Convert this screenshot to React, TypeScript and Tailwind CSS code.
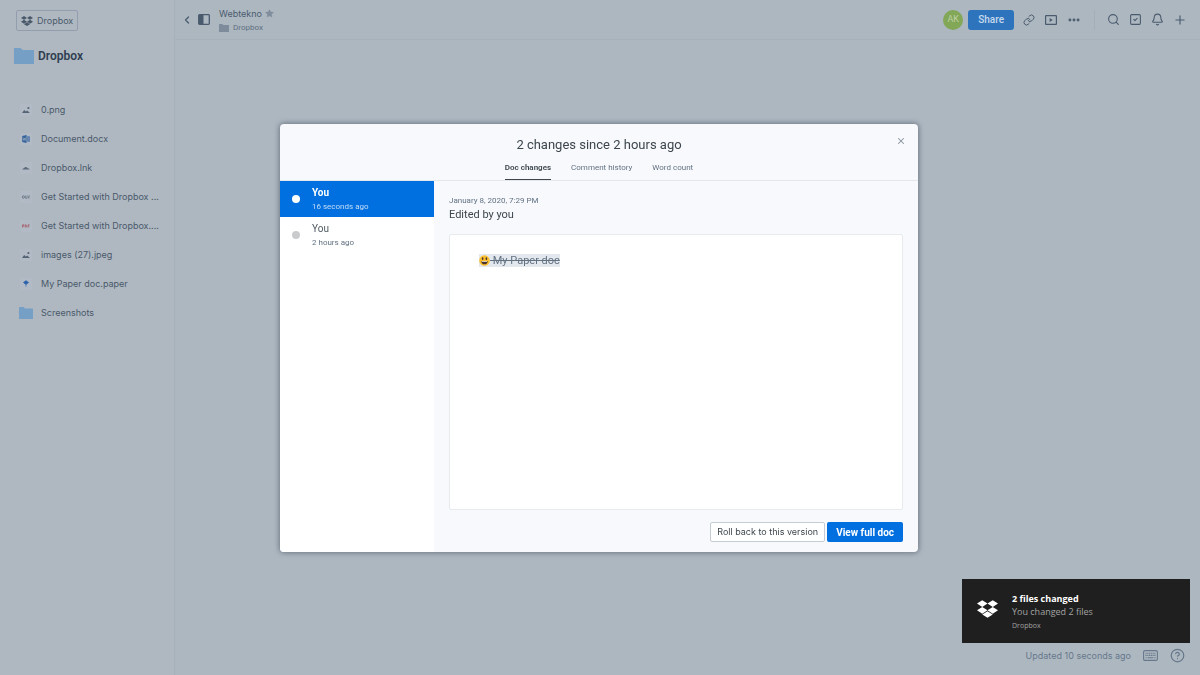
import React from 'react';
import { Bell, ChevronLeft, CircleHelp, Ellipsis, Link, Plus, Search, SquareCheck, Star, X } from 'lucide-react';

type FileKind = 'image' | 'word' | 'link' | 'url' | 'pdf' | 'paper' | 'folder';

interface FileItem {
  name: string;
  kind: FileKind;
}

interface Version {
  author: string;
  when: string;
}

const files: FileItem[] = [
  { name: '0.png', kind: 'image' },
  { name: 'Document.docx', kind: 'word' },
  { name: 'Dropbox.lnk', kind: 'link' },
  { name: 'Get Started with Dropbox ...', kind: 'url' },
  { name: 'Get Started with Dropbox....', kind: 'pdf' },
  { name: 'images (27).jpeg', kind: 'image' },
  { name: 'My Paper doc.paper', kind: 'paper' },
  { name: 'Screenshots', kind: 'folder' },
];

const versions: Version[] = [
  { author: 'You', when: '16 seconds ago' },
  { author: 'You', when: '2 hours ago' },
];

const tabs = ['Doc changes', 'Comment history', 'Word count'];

const DropboxLogo = ({ className }: { className: string }) => (
  <svg viewBox="0 0 24 20" fill="currentColor" className={className} aria-hidden="true">
    <path d="M6 0l6 3.8-6 3.8-6-3.8zM18 0l6 3.8-6 3.8-6-3.8zM6 7.7l6 3.8-6 3.8-6-3.8zM18 7.7l6 3.8-6 3.8-6-3.8zM12 12.6l6 3.7-6 3.7-6-3.7z" />
  </svg>
);

const FolderShape = ({ className }: { className: string }) => (
  <svg viewBox="0 0 20 16" fill="currentColor" className={className} preserveAspectRatio="none" aria-hidden="true">
    <path d="M0 .5Q0 0 .5 0H6.5L8.6 2H19.5Q20 2 20 2.5V15.5Q20 16 19.5 16H.5Q0 16 0 15.5z" />
  </svg>
);

const FileIcon = ({ kind }: { kind: FileKind }) => {
  if (kind === 'folder') return <FolderShape className="h-3 w-[15px] text-[#759fc4]" />;
  return (
    <svg viewBox="0 0 14 14" className="h-[14px] w-[14px]" aria-hidden="true">
      <rect x="1" y="1" width="12" height="12" rx="1" fill="#b1bac5" />
      {kind === 'image' && (
        <g fill="#566475">
          <path d="M3 10l2.2-3 1.7 1.6 1.2-1L11 10z" />
          <circle cx="9.4" cy="5" r="1.1" />
        </g>
      )}
      {kind === 'word' && (
        <g>
          <path d="M3.2 4l4.4-.9v7.8L3.2 10z" fill="#36659c" />
          <path d="M8 4.2h3v5.6H8z" fill="#6486b0" />
          <path d="M4.1 5.6l.6 2.8.7-2.2.7 2.2.6-2.8" fill="none" stroke="#b3bcc7" strokeWidth=".5" />
        </g>
      )}
      {kind === 'link' && <path d="M3.4 8.6q.3-1.5 1.7-1.4.8-1.8 2.4-1 .9.2 1 1.1 1.8-.2 2 1.3z" fill="#5c6a7a" />}
      {kind === 'url' && (
        <g fill="none" stroke="#5c6a7a" strokeWidth=".8">
          <rect x="3.4" y="5.8" width="2" height="2.4" rx=".8" />
          <path d="M6.8 5.5v2.8h1.1M9 5.5v2.8M9.3 7l1.2 1.3M10.6 5.5v1" />
        </g>
      )}
      {kind === 'pdf' && (
        <g fill="none" stroke="#a8606b" strokeWidth=".8">
          <path d="M3.5 8.6V5.8h1.5v1.4H3.5M6.3 5.8v2.4h.8q.8-1.2 0-2.4zM9 8.6V5.8h1.6M9 7.2h1.3" />
        </g>
      )}
      {kind === 'paper' && (
        <g fill="#2d63ab">
          <path d="M7 3.2l3 2.4L7 8 4 5.6z" />
          <path d="M6 8.4h2v1H6z" fill="#6b8db9" />
        </g>
      )}
    </svg>
  );
};

const KeyboardIcon = () => (
  <svg viewBox="0 0 15 11" className="h-[11px] w-[15px]" fill="none" stroke="currentColor" aria-hidden="true">
    <rect x=".6" y=".6" width="13.8" height="9.8" rx="1.4" strokeWidth="1.1" />
    <path d="M2.5 3.2h10M2.5 5.4h10" strokeWidth="1.1" strokeDasharray="1.2 .55" />
    <path d="M2.5 7.7h1.2M4.6 7.7h5.8M11.3 7.7h1.2" strokeWidth="1.1" />
  </svg>
);

const Sidebar = () => (
  <aside className="w-[175px] shrink-0 border-r border-[#a7b1bb] bg-[#afb8c1]">
    <div className="pl-4 pt-[10px]">
      <button className="flex h-[21px] items-center gap-1 rounded-[2px] border border-[#929ead] px-1 font-['Inter',sans-serif] text-[9px] text-[#4a596a]">
        <DropboxLogo className="h-[10px] w-3" />
        <span>Dropbox</span>
      </button>
    </div>
    <div className="flex items-center gap-1 pl-[14px] pt-4">
      <FolderShape className="h-4 w-5 text-[#759fc4]" />
      <h1 className="text-xs font-semibold leading-[18px] text-[#2f3e50]">Dropbox</h1>
    </div>
    <ul className="pt-[30px] font-['Inter',sans-serif]">
      {files.map((file, i) => (
        <li key={i}>
          <a href="#" className="flex h-[29px] items-center gap-2 pl-[19px] text-[9px] text-[#4a596a]">
            <span className="flex w-[14px] justify-center">
              <FileIcon kind={file.kind} />
            </span>
            <span className="whitespace-nowrap">{file.name}</span>
          </a>
        </li>
      ))}
    </ul>
  </aside>
);

const TopBar = () => (
  <header className="flex h-10 items-center border-b border-[#a7b1bb] pl-[6px] pr-[13px] text-[#4a5b6e]">
    <button aria-label="Back">
      <ChevronLeft size={12} strokeWidth={2.5} />
    </button>
    <button aria-label="Toggle sidebar" className="ml-[5px]">
      <svg viewBox="0 0 12 11" className="h-[11px] w-3" aria-hidden="true">
        <rect x=".7" y=".7" width="10.6" height="9.6" rx=".8" fill="none" stroke="currentColor" strokeWidth="1.3" />
        <path d="M1 1h4.5v9H1z" fill="currentColor" />
      </svg>
    </button>
    <div className="ml-[9px] flex flex-col pt-[2px]">
      <div className="flex items-center gap-[3px] font-['Inter',sans-serif] text-[9px] leading-[14px]">
        <span>Webtekno</span>
        <Star size={9} className="text-[#7f8d9c]" fill="currentColor" strokeWidth={1} />
      </div>
      <div className="flex items-center gap-1 text-[8px] leading-[14px] text-[#5f7082]">
        <FolderShape className="h-2 w-[10px] text-[#7d8b9a]" />
        <span>Dropbox</span>
      </div>
    </div>
    <div className="ml-auto flex items-center">
      <span className="flex h-5 w-5 items-center justify-center rounded-full bg-[#81a757] text-[9px] text-[#bed0a4]">AK</span>
      <button className="ml-[5px] h-5 rounded-[3px] bg-[#2e74bd] px-[10px] text-[10px] font-medium text-[#c7d9ec]">Share</button>
      <div className="ml-[9px] flex items-center gap-[10px]">
        <button aria-label="Copy link">
          <Link size={12} />
        </button>
        <button aria-label="Present">
          <svg viewBox="0 0 12 10" className="h-[10px] w-3" aria-hidden="true">
            <rect x=".6" y=".6" width="10.8" height="8.8" rx=".5" fill="none" stroke="currentColor" strokeWidth="1.2" />
            <path d="M4.6 2.9L7.8 5 4.6 7.1z" fill="currentColor" />
          </svg>
        </button>
        <button aria-label="More">
          <Ellipsis size={14} strokeWidth={3} />
        </button>
      </div>
      <div className="ml-[13px] h-5 border-l border-[#a4aeb9]" />
      <div className="ml-3 flex items-center gap-[9px]">
        <button aria-label="Search">
          <Search size={13} />
        </button>
        <button aria-label="To-dos">
          <SquareCheck size={13} />
        </button>
        <button aria-label="Notifications">
          <Bell size={13} />
        </button>
        <button aria-label="Create">
          <Plus size={14} />
        </button>
      </div>
    </div>
  </header>
);

const SmileyIcon = () => (
  <svg viewBox="0 0 20 20" className="h-[11px] w-[11px]" role="img" aria-label="Smiling face">
    <circle cx="10" cy="10" r="9.6" fill="#fbc02d" />
    <ellipse cx="6.6" cy="6.6" rx="1.5" ry="2.5" fill="#4e342e" />
    <ellipse cx="13.4" cy="6.6" rx="1.5" ry="2.5" fill="#4e342e" />
    <path d="M4 11.2h12q-.6 5.6-6 5.6t-6-5.6z" fill="#4e342e" />
    <path d="M5.4 11.5h9.2v1.2H5.4z" fill="#fff" />
  </svg>
);

const HistoryDialog = () => (
  <div
    role="dialog"
    aria-labelledby="history-title"
    className="relative flex w-full max-w-[638px] flex-col overflow-hidden rounded-[4px] bg-[#f7f9fc] text-[#3d464d] shadow-[0_0_5px_1px_rgba(70,80,95,0.6)]"
  >
    <header className="flex flex-col items-center border-b border-[#e4e8ed]">
      <h2 id="history-title" className="pt-3 text-[13px] leading-[18px]">
        2 changes since 2 hours ago
      </h2>
      <nav className="mt-1 flex gap-5 text-[8px]" role="tablist">
        {tabs.map((tab, i) => (
          <button
            key={tab}
            role="tab"
            aria-selected={i === 0}
            className={`h-[22px] border-b pb-[2px] ${i === 0 ? 'border-[#3d464d] font-semibold' : 'border-transparent text-[#637282]'}`}
          >
            {tab}
          </button>
        ))}
      </nav>
    </header>
    <button aria-label="Close" className="absolute right-3 top-3 text-[#8b949d]">
      <X size={10} strokeWidth={2.5} />
    </button>
    <div className="flex">
      <ul className="w-[154px] shrink-0 bg-white">
        {versions.map((version, i) => (
          <li key={version.when}>
            <button
              className={`flex h-9 w-full items-center gap-3 pl-3 text-left ${i === 0 ? 'bg-[#0070e0] text-white' : 'text-[#4f5962]'}`}
            >
              <span className={`h-2 w-2 rounded-full ${i === 0 ? 'bg-white' : 'bg-[#c9cbcd]'}`} />
              <span className="flex flex-col pt-[2px]">
                <span className={`text-[10px] leading-[14px] ${i === 0 ? 'font-bold' : ''}`}>{version.author}</span>
                <span className={`text-[8px] leading-[14px] ${i === 0 ? 'text-[#c3dcf7]' : 'text-[#637282]'}`}>{version.when}</span>
              </span>
            </button>
          </li>
        ))}
      </ul>
      <section className="flex-1 px-[15px] pb-[10px] pt-[13px]">
        <p className="text-[8px] leading-[14px] text-[#637282]">January 8, 2020, 7:29 PM</p>
        <p className="text-[11px] leading-[14px]">Edited by you</p>
        <div className="mt-3 min-h-[276px] rounded-[2px] border border-[#e8ebee] bg-white px-[29px] pt-[19px]">
          <p className="flex w-fit items-center bg-[#e3e8ee] text-[11px] leading-[13px] text-[#637282]">
            <SmileyIcon />
            <del className="whitespace-pre"> My Paper doc</del>
          </p>
        </div>
        <div className="mt-3 flex justify-end gap-[2px]">
          <button className="h-5 rounded-[2px] border border-[#c5ccd3] bg-white px-[6px] font-['Inter',sans-serif] text-[9px] leading-[18px]">
            Roll back to this version
          </button>
          <button className="h-5 rounded-[2px] bg-[#0070e0] px-[9px] text-[10px] font-bold text-white">View full doc</button>
        </div>
      </section>
    </div>
  </div>
);

const Toast = () => (
  <div
    role="status"
    className="flex h-16 w-[228px] items-center gap-[14px] bg-[#1f1f1f] pl-[15px] font-['Open_Sans','Noto_Sans',sans-serif]"
  >
    <DropboxLogo className="mb-1 h-5 w-[21px] text-white" />
    <div className="flex flex-col pt-[2px]">
      <span className="text-[9px] font-bold leading-[13px] text-white">2 files changed</span>
      <span className="text-[9px] leading-[13px] text-[#a3a3a3]">You changed 2 files</span>
      <span className="text-[7px] leading-[15px] text-[#a3a3a3]">Dropbox</span>
    </div>
  </div>
);

const App: React.FC = () => {
  return (
    <div className="flex min-h-screen bg-[#adb7c0] font-['Roboto','Liberation_Sans',sans-serif]">
      <Sidebar />
      <main className="flex min-w-0 flex-1 flex-col">
        <TopBar />
        <footer className="mt-auto flex items-center justify-end pb-3 pr-[15px] font-['Inter',sans-serif] text-[9px] leading-[14px] text-[#67788b]">
          <span>Updated 10 seconds ago</span>
          <button aria-label="Keyboard shortcuts" className="ml-3">
            <KeyboardIcon />
          </button>
          <button aria-label="Help" className="ml-3">
            <CircleHelp size={15} />
          </button>
        </footer>
      </main>
      <div className="fixed inset-0 flex items-center justify-center pr-[2px] pt-px">
        <HistoryDialog />
      </div>
      <div className="fixed bottom-8 right-[10px]">
        <Toast />
      </div>
    </div>
  );
};

export default App;
